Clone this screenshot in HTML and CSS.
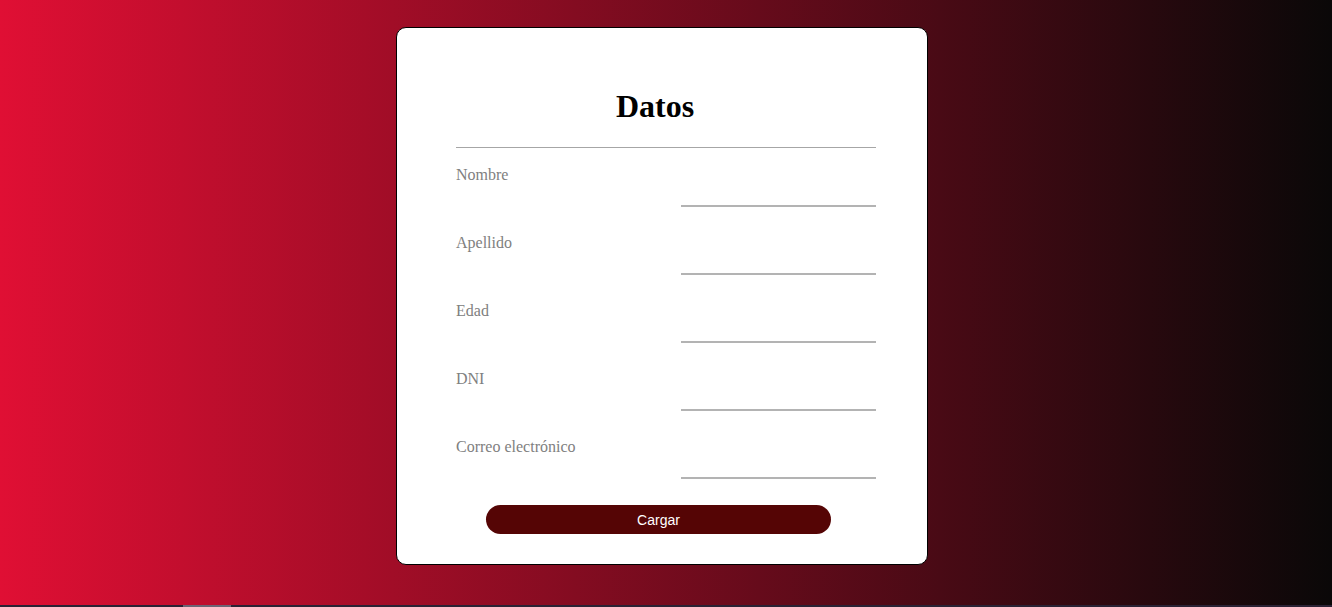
FILE: index.html
```html
<!DOCTYPE html>
<html lang="es">
<head>
<meta charset="utf-8">
<title>Datos</title>
<link rel="stylesheet" href="styles.css">
</head>
<body>
<main class="page">
  <form class="card">
    <h1 class="title">Datos</h1>
    <hr class="divider">
    <div class="field">
      <label class="label">Nombre</label>
      <input class="input" type="text">
    </div>
    <div class="field">
      <label class="label">Apellido</label>
      <input class="input" type="text">
    </div>
    <div class="field">
      <label class="label">Edad</label>
      <input class="input" type="text">
    </div>
    <div class="field">
      <label class="label">DNI</label>
      <input class="input" type="text">
    </div>
    <div class="field">
      <label class="label">Correo electrónico</label>
      <input class="input" type="text">
    </div>
    <button class="btn" type="button">Cargar</button>
  </form>
</main>
<div class="hscroll"><div class="thumb"></div></div>
</body>
</html>
```
FILE: styles.css
```css
html, body {
  margin: 0;
  padding: 0;
  height: 100%;
  overflow: hidden;
}
body {
  display: flex;
  flex-direction: column;
  font-family: "Liberation Serif", "Times New Roman", serif;
  background: linear-gradient(to right, #e00f34, #0a0808);
}
.page {
  flex: 1;
  display: flex;
  justify-content: center;
  align-items: flex-start;
  padding-top: 27px;
  padding-right: 8px;
}
.card {
  display: flex;
  flex-direction: column;
  box-sizing: border-box;
  width: 532px;
  height: 538px;
  padding: 60px 51px 30px 59px;
  background: #fff;
  border: 1px solid #000;
  border-radius: 10px;
}
.title {
  margin: 0;
  padding-right: 22px;
  font-size: 32px;
  font-weight: bold;
  text-align: center;
  line-height: 37px;
  color: #000;
}
.divider {
  margin: 22px 0 18px;
  border: 0;
  border-top: 1px solid #a6a6a6;
  height: 0;
}
.field {
  display: flex;
  flex-direction: column;
  margin-bottom: 27px;
}
.field:last-of-type {
  margin-bottom: 26px;
}
.label {
  font-size: 16px;
  line-height: 18px;
  color: #808080;
}
.input {
  align-self: flex-end;
  width: 195px;
  height: 23px;
  box-sizing: border-box;
  border: 0;
  border-bottom: 2px solid #b3b3b3;
  outline: none;
  background: transparent;
  padding: 0;
}
.btn {
  align-self: flex-start;
  margin-left: 30px;
  width: 345px;
  height: 29px;
  border: 0;
  border-radius: 15px;
  background: #550505;
  color: #fff;
  font-family: "Liberation Sans", Arial, sans-serif;
  font-size: 14px;
}
.hscroll {
  height: 2px;
  background: #2a2234;
}
.thumb {
  margin-left: 183px;
  width: 48px;
  height: 2px;
  background: #6b6474;
}
```
